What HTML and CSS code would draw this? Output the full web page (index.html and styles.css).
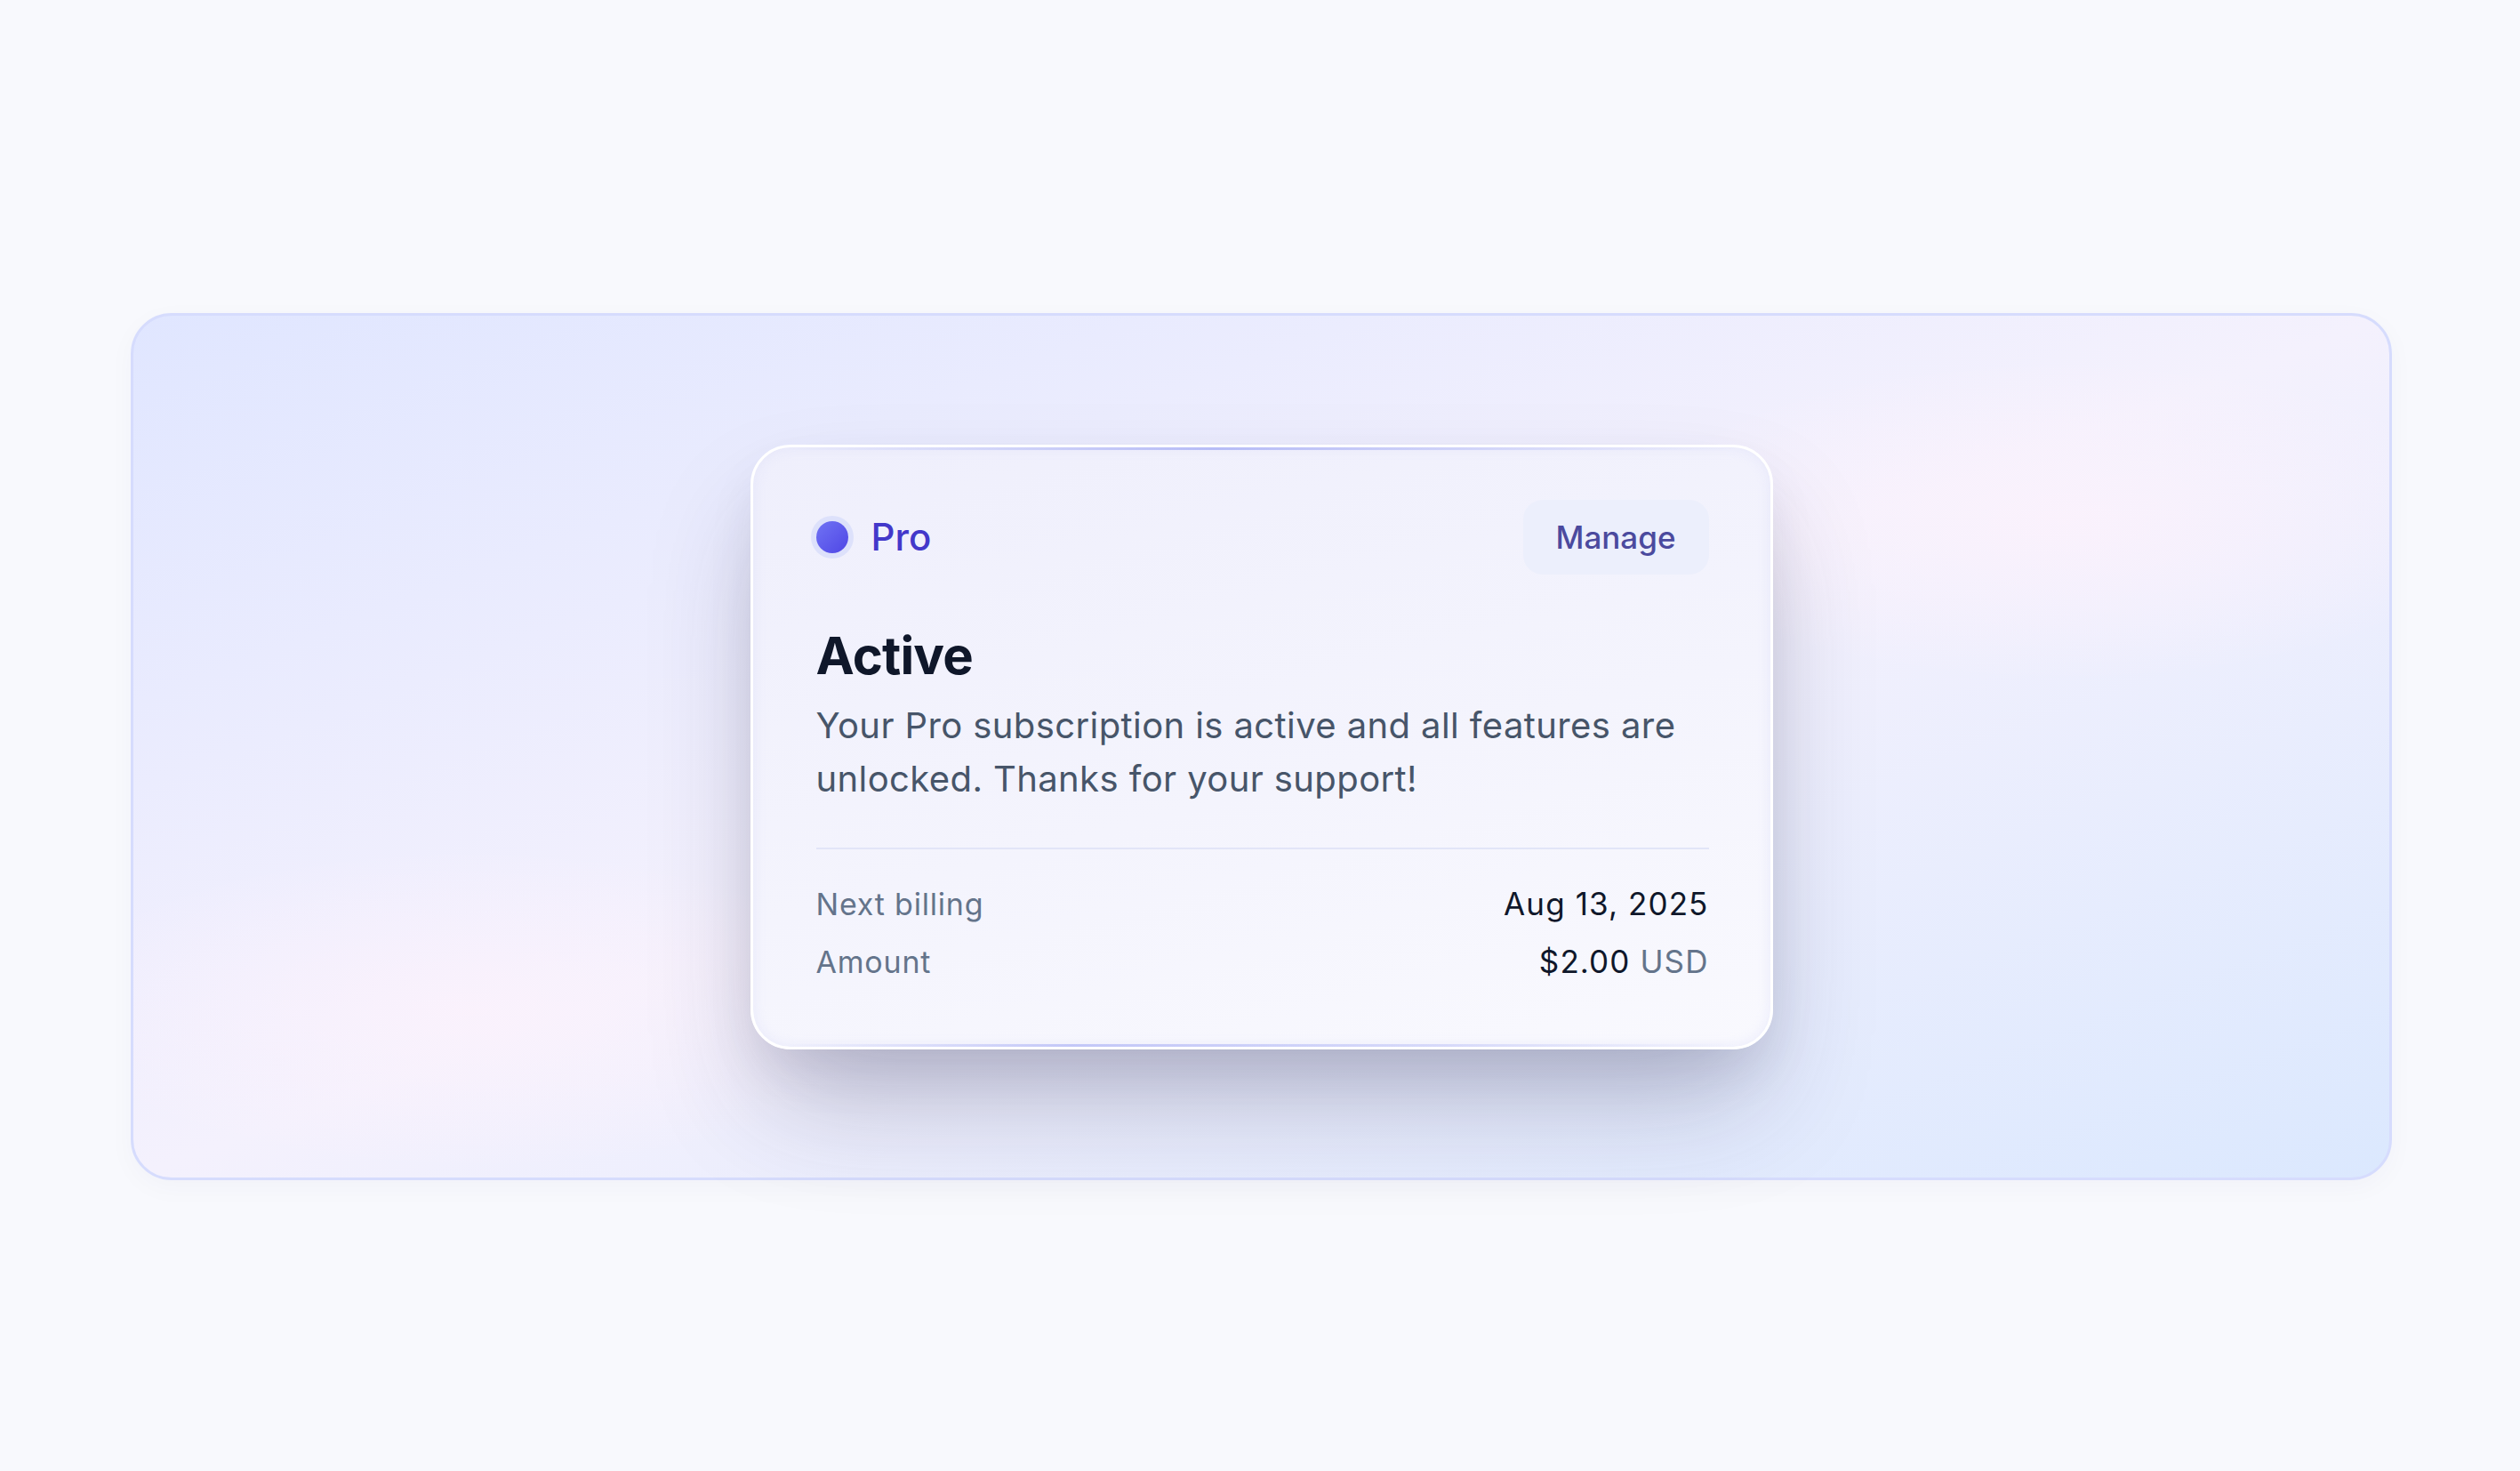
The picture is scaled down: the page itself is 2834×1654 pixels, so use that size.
FILE: index.html
```html
<!DOCTYPE html>
<html lang="en">
<head>
<meta charset="utf-8">
<title>Subscription</title>
<link rel="stylesheet" href="styles.css">
</head>
<body>
<main class="page">
  <section class="panel">
    <article class="card">
      <header class="card-head">
        <div class="plan">
          <span class="plan-dot"></span>
          <span class="plan-name">Pro</span>
        </div>
        <button class="manage-btn" type="button">Manage</button>
      </header>
      <h1 class="status">Active</h1>
      <p class="desc">Your Pro subscription is active and all features are unlocked. Thanks for your support!</p>
      <hr class="divider">
      <dl class="details">
        <div class="row">
          <dt class="label">Next billing</dt>
          <dd class="value">Aug 13, 2025</dd>
        </div>
        <div class="row">
          <dt class="label">Amount</dt>
          <dd class="value">$2.00 <span class="currency">USD</span></dd>
        </div>
      </dl>
    </article>
  </section>
</main>
</body>
</html>
```

FILE: styles.css
```css
* { box-sizing: border-box; }

html, body {
  margin: 0;
  padding: 0;
}

body {
  background: #f8f9fd;
  font-family: Inter, "Noto Sans", "Liberation Sans", sans-serif;
  width: 2834px;
  height: 1654px;
  overflow: hidden;
}

.page {
  padding: 352px 144px 0 147px;
}

.panel {
  width: 2543px;
  height: 975px;
  border: 3px solid #d6dcfd;
  border-radius: 46px;
  background:
    radial-gradient(ellipse 700px 260px at 2170px 230px, rgba(253, 242, 252, 0.75), rgba(253, 242, 252, 0) 70%),
    radial-gradient(ellipse 700px 260px at 380px 780px, rgba(253, 242, 252, 0.7), rgba(253, 242, 252, 0) 70%),
    linear-gradient(to bottom right, #e0e6ff 0%, #f4f1fd 50%, #dbe8fe 100%);
  box-shadow: 0 8px 30px rgba(30, 40, 90, 0.03);
  display: flex;
  align-items: center;
  justify-content: center;
}

.card {
  position: relative;
  width: 1150px;
  height: 680px;
  margin-top: 1px;
  border: 3px solid #ffffff;
  border-radius: 45px;
  background: linear-gradient(165deg, #efeffc 0%, #f4f4fd 55%, #f9f9fe 100%);
  box-shadow:
    0 70px 130px -20px rgba(40, 40, 80, 0.28),
    0 30px 60px -10px rgba(40, 40, 80, 0.10),
    inset 0 0 14px rgba(215, 218, 248, 0.45);
  padding: 59px 69px 0 71px;
  display: flex;
  flex-direction: column;
}

.card::before,
.card::after {
  content: "";
  position: absolute;
  left: 40px;
  right: 40px;
  height: 3px;
  background: linear-gradient(90deg, rgba(165, 172, 245, 0), rgba(165, 172, 245, 0.75) 45%, rgba(165, 172, 245, 0));
}

.card::before { top: 0; }
.card::after {
  bottom: 0;
  background: linear-gradient(90deg, rgba(165, 172, 245, 0), rgba(165, 172, 245, 0.6) 30%, rgba(165, 172, 245, 0.35) 70%, rgba(165, 172, 245, 0));
}

.card-head {
  display: flex;
  align-items: center;
  justify-content: space-between;
  height: 84px;
}

.plan {
  display: flex;
  align-items: center;
  gap: 26px;
}

.plan-dot {
  width: 36px;
  height: 36px;
  border-radius: 50%;
  background: linear-gradient(135deg, #7073f4 0%, #4f46e5 100%);
  box-shadow: 0 0 0 6px #dde1fb;
}

.plan-name {
  font-size: 42px;
  font-weight: 500;
  color: #4338ca;
  line-height: 1;
}

.manage-btn {
  height: 84px;
  width: 209px;
  border: none;
  border-radius: 22px;
  background: #eceffc;
  color: #4b4a9e;
  font-family: inherit;
  font-size: 35px;
  font-weight: 500;
  padding: 0;
  cursor: pointer;
}

.status {
  margin: 56px 0 0;
  font-size: 58px;
  line-height: 70px;
  font-weight: 700;
  color: #0f172a;
  letter-spacing: -0.8px;
}

.desc {
  margin: 14px 0 0;
  font-size: 40px;
  line-height: 60px;
  color: #475569;
  letter-spacing: 0.4px;
}

.divider {
  margin: 47px 0 0;
  border: none;
  height: 2px;
  background: #e2e5f8;
}

.details {
  margin: 36px 0 0;
  display: flex;
  flex-direction: column;
  gap: 14px;
}

.row {
  display: flex;
  justify-content: space-between;
  align-items: baseline;
  font-size: 34px;
  line-height: 51px;
  letter-spacing: 0.8px;
}

.label {
  margin: 0;
  color: #64748b;
}

.value {
  margin: 0;
  color: #0f172a;
  font-weight: 420;
  font-size: 35px;
  letter-spacing: 1.1px;
}

.currency {
  color: #64748b;
  font-weight: 400;
}
```
